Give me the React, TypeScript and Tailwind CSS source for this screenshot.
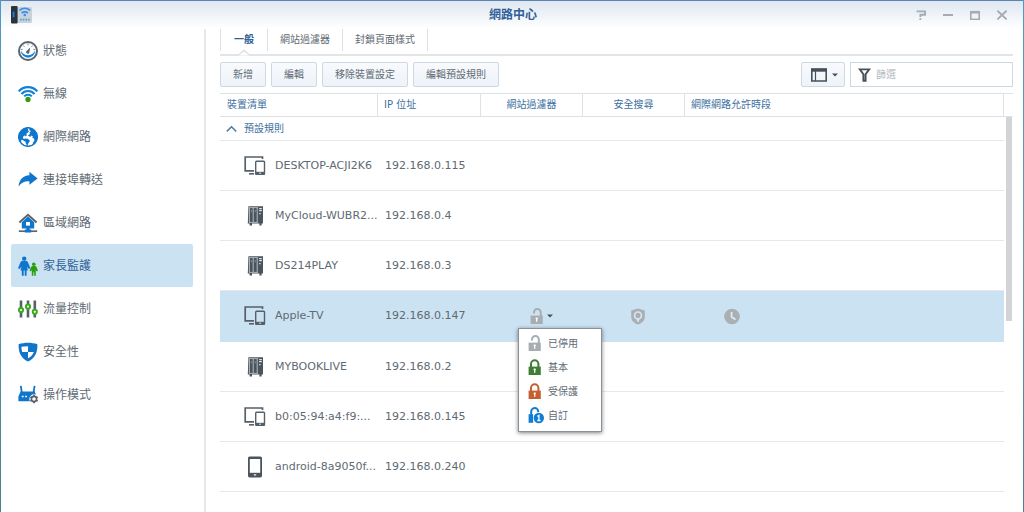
import React, {useState} from 'react';

type IconProps = { className?: string };

const GaugeIcon = () => (
  <svg width="20" height="20" viewBox="0 0 20 20" fill="none">
    <circle cx="10" cy="10" r="9" fill="#fbfcfd" stroke="#5a646e" strokeWidth="2"/>
    <path d="M2.800 9.500a7.200 7.200 0 0 0 14.400 0c-1.600 3-4 4.700-7.200 4.700s-5.600-1.700-7.200-4.700z" fill="#0f80d8"/>
    <path d="M10 2.400v1.800M5.400 4.600l1 1.200M14.600 4.600l-1 1.200M3 8.400h1.500M15.500 8.400H17" stroke="#7b848c" strokeWidth="1"/>
    <path d="M12.200 6.600L8.600 10a1.600 1.600 0 1 0 2.800 1.200z" fill="#5a646e"/>
  </svg>
);

const WifiIcon = () => (
  <svg width="20" height="20" viewBox="0 0 20 20" fill="none">
    <path d="M.6 7.400A12.500 12.500 0 0 1 19.400 7.400M3.400 10a8.700 8.700 0 0 1 13.200 0M6.200 12.400a5.200 5.200 0 0 1 7.600 0" stroke="#0f80d8" strokeWidth="2.100"/>
    <circle cx="10" cy="15.400" r="2.600" fill="#2aa010"/>
  </svg>
);

const GlobeIcon = () => (
  <svg width="20" height="20" viewBox="0 0 20 20" fill="none">
    <circle cx="10" cy="10" r="9.300" fill="#fff" stroke="#0f76cc" strokeWidth="1.500"/>
    <path d="M9.400.800C4.600 1 .800 5 .800 10c0 2.200.8 4.200 2 5.800l.6-3 1.600.4 2.400 1.600.6 2 1.200 2.200 1.200-2.800 1.600-2.200-1.800-2-2.400-.6-2.200.6-.8-2 2.200-1.800.6 1.200 1.200-1.200-.4-1.600 2.400-1.600-.6-2z" fill="#0f76cc"/>
    <path d="M11.600 1l-.4 2.200 1.800.8-1.600 1.600.6 1.400-2.200 1.400 2.600 1.600.6-1.400 1.800.6-.4 1.600 1.600.8.400 2.200-1.800 2.400 1 1.400c2-1.600 3.600-4.400 3.600-7.600C19 5.800 16 1.800 11.600 1z" fill="#0f76cc"/>
  </svg>
);

const ForwardIcon = () => (
  <svg width="20" height="20" viewBox="0 0 20 20" fill="none">
    <path d="M11.400 1.800L19.600 8.400l-8.200 6.400v-3.400C7 11 3.600 12.400.6 16.400 1.200 9.800 4.800 5.600 11.400 5.200z" fill="#0f76cc"/>
  </svg>
);

const HouseIcon = () => (
  <svg width="20" height="20" viewBox="0 0 20 20" fill="none">
    <path d="M.8 18.200h18.400" stroke="#5b656e" strokeWidth="1.700"/>
    <path d="M3.800 9.200L10 3.600l6.200 5.600v6.200h-4.600v1.200h1.600v2.800H6.800v-2.800h1.600v-1.200H3.800z" fill="#0f76cc"/>
    <path d="M1.400 9.400L10 1.800l8.600 7.600" stroke="#5b656e" strokeWidth="2"/>
    <path d="M8 9h4v3.600H8z" fill="#fff"/>
  </svg>
);

const FamilyIcon = () => (
  <svg width="20" height="20" viewBox="0 0 20 20" fill="none">
    <circle cx="6.200" cy="2.600" r="2.200" fill="#0f76cc"/>
    <path d="M4.200 4.800h4l1.500.9 2.700 6.500-1.600.9-1.900-2.700 1.100 4.200H8.600v5.200H6.700v-5.200h-1v5.200H3.800v-5.200H2.400l1.100-4.200-1.900 2.700L0 12.200l2.700-6.500z" fill="#0f76cc"/>
    <circle cx="15.800" cy="8.300" r="1.800" fill="#2aa010"/>
    <path d="M14.200 10h3.200l1 .7 1.600 4.100-1.200.6-1-1.400v5.800h-1.600v-3.600h-.8v3.600h-1.600V14l-1 1.400-1.200-.6 1.600-4.100z" fill="#2aa010"/>
  </svg>
);

const SlidersIcon = () => (
  <svg width="20" height="20" viewBox="0 0 20 20" fill="none">
    <path d="M3 1.600v17M10 1.600v17M16.800 1.600v17" stroke="#56616b" strokeWidth="2.600"/>
    <g fill="#fff" stroke="#38ad1b" strokeWidth="2">
      <circle cx="3" cy="11" r="2.100"/>
      <circle cx="10" cy="7.600" r="2.100"/>
      <circle cx="16.800" cy="12.800" r="2.100"/>
    </g>
  </svg>
);

const ShieldIcon = () => (
  <svg width="20" height="20" viewBox="0 0 20 20" fill="none">
    <path d="M.6 2.200C6.400.200 13.600.200 19.400 2.200c.2 8-2 13.600-9.400 17.400C2.600 15.800.400 10.200.6 2.200z" fill="#0f76cc"/>
    <path d="M10 4.200V10H4.200C3.600 8.200 3.400 6.400 3.400 4.800 5.400 4.400 7.600 4.200 10 4.200zM10 10h5.800c-.8 2.600-2.600 4.600-5.800 6.200z" fill="#fff"/>
  </svg>
);

const RouterIcon = () => (
  <svg width="20" height="20" viewBox="0 0 20 20" fill="none">
    <path d="M2.800.8l1 6.600M16.600.8l-1 6.600" stroke="#0f76cc" strokeWidth="1.800"/>
    <path d="M2.600 6.400h14.200l1.400 4.400v5.400H.4v-4.600z" fill="#0f76cc"/>
    <path d="M3.800 11.400h1.800M7.200 11.400H9" stroke="#fff" strokeWidth="1.500"/>
    <circle cx="16" cy="14" r="4.700" fill="#fff"/>
    <circle cx="16" cy="14" r="2.600" stroke="#56616b" strokeWidth="1.600"/>
    <path d="M16 9.800v1.600M16 16.600v1.600M12.400 11.900l1.400.8M18.200 15.300l1.400.8M12.400 16.100l1.400-.8M18.200 12.700l1.400-.8" stroke="#56616b" strokeWidth="1.700"/>
  </svg>
);

const ComputerIcon = () => (
  <svg width="22" height="22" viewBox="0 0 22 22" fill="none" stroke="#56606a">
    <path d="M18.500 4V2H1.200v13.800H10" strokeWidth="1.700"/>
    <path d="M5 18.800h5" strokeWidth="1.600"/>
    <rect x="11.700" y="6.200" width="8.800" height="13" rx=".8" strokeWidth="1.400"/>
    <path d="M11.500 18.200h9.200" strokeWidth="2.800"/>
    <path d="M15.300 18.200h1.600" stroke="#fff" strokeWidth="1"/>
  </svg>
);

const NasIcon = () => (
  <svg width="22" height="22" viewBox="0 0 22 22" fill="none">
    <path d="M4.400 1.200H19v17.400h-1.400v1.800h-2.200v-1.800H8v1.800H5.600v-1.800H3.800z" fill="#4a545e"/>
    <path d="M5.400 3v14.400M9.200 3v14.400M13.200 3v14.400" stroke="#b3bac0" strokeWidth="1"/>
    <path d="M5 2.600h9M5 17.400h9" stroke="#b3bac0" strokeWidth=".9"/>
    <path d="M7.300 5v2.400M11.200 5v2.400" stroke="#8a939b" strokeWidth=".9"/>
    <path d="M15.200 3.600h2.600M15.200 5.600h2.600M15.200 8.600h1.400" stroke="#e3e6e9" strokeWidth="1.100"/>
  </svg>
);

const PhoneIcon = () => (
  <svg width="22" height="22" viewBox="0 0 22 22" fill="none">
    <rect x="4" y=".6" width="14" height="20.800" rx="1.600" fill="#4a545e"/>
    <path d="M5.800 3h10.400v13.800H5.800z" fill="#fff"/>
    <path d="M9.800 18.900h2.400" stroke="#fff" strokeWidth="1.200"/>
  </svg>
);

const OpenLockIcon = () => (
  <svg width="14" height="17" viewBox="0 0 14 17" fill="none">
    <path d="M4 5.600V4.400a3.400 3.400 0 0 1 6.800 0V8" stroke="#a7adb1" strokeWidth="2"/>
    <path d="M.6 7.600h12.200V16H.600z" fill="#a7adb1"/>
    <path d="M6.700 9.600v4.200M5.600 10.400h2.200" stroke="#fff" strokeWidth="1.300"/>
  </svg>
);

const LockIcon = ({className}: IconProps) => (
  <svg width="14" height="17" viewBox="0 0 14 17" fill="none" className={className}>
    <path d="M3 8V5a3.700 3.700 0 0 1 7.400 0v3" stroke="currentColor" strokeWidth="2"/>
    <path d="M.6 7.600h12.200V16H.600z" fill="currentColor"/>
    <path d="M6.700 9.600v4.200M5.600 10.400h2.200" stroke="#fff" strokeWidth="1.300"/>
  </svg>
);

const CustomLockIcon = () => (
  <svg width="17" height="17" viewBox="0 0 17 17" fill="none">
    <path d="M3.200 8V4.600a3.500 3.500 0 0 1 7-.2v1" stroke="#0f7ed3" strokeWidth="2"/>
    <path d="M.6 7.200h4.600v8.600H.600z" fill="#0f7ed3"/>
    <circle cx="10.800" cy="11" r="5.900" fill="#fff"/>
    <circle cx="10.800" cy="11" r="5.200" fill="#0f7ed3"/>
    <path d="M9.400 9.400l1.500-.9v5M9.300 13.500h3.200" stroke="#fff" strokeWidth="1.300"/>
  </svg>
);

const SafeSearchIcon = () => (
  <svg width="16" height="17" viewBox="0 0 16 17" fill="none">
    <path d="M8 .4l6.800 2.200v6.200c0 3.600-2.600 6.200-6.800 7.800-4.200-1.600-6.800-4.200-6.800-7.800V2.600z" fill="#a9afb3"/>
    <circle cx="8" cy="7.400" r="3.400" stroke="#d5e6f2" strokeWidth="1.700"/>
    <path d="M8 10.400v3.400" stroke="#d5e6f2" strokeWidth="2"/>
  </svg>
);

const ClockIcon = () => (
  <svg width="16" height="17" viewBox="0 0 16 17" fill="none">
    <circle cx="8" cy="8.500" r="7.800" fill="#a9afb3"/>
    <path d="M7.600 4v5l4 2.400" stroke="#dcebf5" strokeWidth="1.800"/>
  </svg>
);

const CaretIcon = () => (
  <svg width="6" height="4" viewBox="0 0 6 4" fill="#46505a"><path d="M0 .4h6L3 3.600z"/></svg>
);

const AppIcon = () => (
  <svg width="22" height="18" viewBox="0 0 22 18" fill="none">
    <rect x="6" y="1" width="15" height="16" rx="1.500" fill="#c9d1d9"/>
    <rect x="0" y="0" width="6.600" height="17.400" rx="1" fill="#2a323c"/>
    <path d="M2.600 5.600v5.600" stroke="#1c7fd8" strokeWidth="1.800"/>
    <path d="M8.400 4.400c3.200-2.600 7.600-2.600 10.800 0M10.600 7c2-1.500 4.400-1.500 6.400 0" stroke="#3a8cf0" strokeWidth="1.700"/>
    <circle cx="13.800" cy="9" r="1.300" fill="#3a8cf0"/>
    <path d="M9 13.600h10" stroke="#4aa8d8" strokeWidth="1.600" strokeDasharray="1.600 1.100"/>
  </svg>
);

const navItems = [
  {label: '狀態', Icon: GaugeIcon},
  {label: '無線', Icon: WifiIcon},
  {label: '網際網路', Icon: GlobeIcon},
  {label: '連接埠轉送', Icon: ForwardIcon},
  {label: '區域網路', Icon: HouseIcon},
  {label: '家長監護', Icon: FamilyIcon},
  {label: '流量控制', Icon: SlidersIcon},
  {label: '安全性', Icon: ShieldIcon},
  {label: '操作模式', Icon: RouterIcon},
];

const tabs = ['一般', '網站過濾器', '封鎖頁面樣式'];

const actions = ['新增', '編輯', '移除裝置設定', '編輯預設規則'];

const devices = [
  {name: 'DESKTOP-ACJI2K6', ip: '192.168.0.115', Icon: ComputerIcon},
  {name: 'MyCloud-WUBR2...', ip: '192.168.0.4', Icon: NasIcon},
  {name: 'DS214PLAY', ip: '192.168.0.3', Icon: NasIcon},
  {name: 'Apple-TV', ip: '192.168.0.147', Icon: ComputerIcon},
  {name: 'MYBOOKLIVE', ip: '192.168.0.2', Icon: NasIcon},
  {name: 'b0:05:94:a4:f9:...', ip: '192.168.0.145', Icon: ComputerIcon},
  {name: 'android-8a9050f...', ip: '192.168.0.240', Icon: PhoneIcon},
];

const TitleBar = () => (
  <header className="grid h-7 shrink-0 grid-cols-[1fr_auto_1fr] items-center bg-linear-to-b from-[#dfe7f0] to-white pr-2 pl-[10px]">
    <AppIcon/>
    <h1 className="text-[12px] font-bold text-[#2f6097]">網路中心</h1>
    <div className="flex justify-end text-[#a3abb3]">
      <button type="button" aria-label="說明" className="flex w-[27px] justify-center">
        <svg width="12" height="12" viewBox="0 0 12 12" fill="none" stroke="currentColor" strokeWidth="1.900">
          <path d="M1.600 2.400H10v3.400H5.400V8M5.400 9.200v1.800"/>
        </svg>
      </button>
      <button type="button" aria-label="最小化" className="flex w-[27px] justify-center">
        <svg width="12" height="12" viewBox="0 0 12 12" stroke="currentColor" strokeWidth="2"><path d="M1 6h10"/></svg>
      </button>
      <button type="button" aria-label="最大化" className="flex w-[27px] justify-center">
        <svg width="12" height="12" viewBox="0 0 12 12" fill="none" stroke="currentColor">
          <path d="M1.800 2.500v7.700h8.400V2.500" strokeWidth="1.600"/>
          <path d="M1 3.200h10" strokeWidth="2.600"/>
        </svg>
      </button>
      <button type="button" aria-label="關閉" className="flex w-[27px] justify-center">
        <svg width="12" height="12" viewBox="0 0 12 12" stroke="currentColor" strokeWidth="1.900"><path d="M1.400 1.800l9.200 8.600M10.600 1.800L1.400 10.400"/></svg>
      </button>
    </div>
  </header>
);

const FilterMenu = () => (
  <ul className="absolute top-full -left-3 z-10 mt-[3px] w-[84px] border border-[#8a9299] bg-white py-[3px] shadow-[0_1px_4px_rgba(0,0,0,0.5)]">
    <li><button type="button" className="flex h-6 w-full items-center gap-[6px] pl-[9px]"><OpenLockIcon/>已停用</button></li>
    <li><button type="button" className="flex h-6 w-full items-center gap-[6px] pl-[9px]"><LockIcon className="text-[#3f7d35]"/>基本</button></li>
    <li><button type="button" className="flex h-6 w-full items-center gap-[6px] pl-[9px]"><LockIcon className="text-[#c65f2f]"/>受保護</button></li>
    <li><button type="button" className="flex h-6 w-full items-center gap-[3px] pl-[9px]"><CustomLockIcon/>自訂</button></li>
  </ul>
);

const DeviceTable = () => {
  const [selected, setSelected] = useState('Apple-TV');
  const [menuOpen, setMenuOpen] = useState(true);

  return (
    <table className="min-w-0 flex-1 table-fixed border-separate border-spacing-0 text-left">
      <colgroup>
        <col className="w-[158px]"/>
        <col className="w-[103px]"/>
        <col className="w-[102px]"/>
        <col className="w-[102px]"/>
        <col/>
      </colgroup>
      <thead>
        <tr className="h-6 text-[#3d709e] *:border-y *:border-[#dde2e8] *:p-0 *:font-normal">
          <th className="border-r"><span className="pl-[7px]">裝置清單</span></th>
          <th className="border-r"><span className="pl-[6px]">IP 位址</span></th>
          <th className="border-r text-center">網站過濾器</th>
          <th className="border-r text-center">安全搜尋</th>
          <th className="border-r"><span className="pl-[6px]">網際網路允許時段</span></th>
        </tr>
      </thead>
      <tbody>
        <tr className="h-6">
          <td colSpan={5} className="border-b border-[#e6e9ec] p-0">
            <button type="button" className="flex items-center gap-[7px] pl-[6px] text-[#3d709e]">
              <svg width="11" height="8" viewBox="0 0 11 8" fill="none" stroke="#4a7fa8" strokeWidth="1.500"><path d="M.8 6.400l4.700-4.600 4.700 4.600"/></svg>
              預設規則
            </button>
          </td>
        </tr>
        {devices.map(({name, ip, Icon}) => {
          const active = name === selected;
          return (
            <tr
              key={name}
              onClick={() => setSelected(name)}
              className={active
                ? 'h-[51px] bg-[#cbe2f2] *:border-b *:border-[#cbe2f2] *:p-0'
                : 'h-[50px] *:border-b *:border-[#e6e9ec] *:p-0'}
            >
              <td>
                <div className="flex items-center gap-[9px] pl-6 text-[11px]"><Icon/>{name}</div>
              </td>
              <td className="text-[11px]"><span className="pl-[7px]">{ip}</span></td>
              <td>
                {active && (
                  <div className="relative ml-[49px] w-[34px]">
                    <button type="button" aria-label="網站過濾器" aria-expanded={menuOpen}
                            onClick={() => setMenuOpen(!menuOpen)} className="flex items-center gap-[3px]">
                      <OpenLockIcon/><CaretIcon/>
                    </button>
                    {menuOpen && <FilterMenu/>}
                  </div>
                )}
              </td>
              <td>
                {active && <button type="button" aria-label="安全搜尋" className="ml-[47px] block"><SafeSearchIcon/></button>}
              </td>
              <td>
                {active && <button type="button" aria-label="網際網路允許時段" className="ml-[39px] block"><ClockIcon/></button>}
              </td>
            </tr>
          );
        })}
      </tbody>
    </table>
  );
};

const App = () => {
  const [page, setPage] = useState('家長監護');
  const [tab, setTab] = useState('一般');

  return (
    <div className="h-screen overflow-hidden bg-linear-to-b from-[#4a9ac4] via-[#5f97a3] to-[#50808e] px-px font-['DejaVu_Sans','Noto_Sans_CJK_TC',sans-serif] text-[10px] leading-4 text-[#606a73]">
      <div className="flex h-full flex-col border-t border-[#5c83b3] bg-white">
        <TitleBar/>
        <div className="flex min-h-0 flex-1">
          <nav className="w-[205px] shrink-0 border-r-2 border-[#e6e8ea] pr-[11px] pl-[10px]">
            {navItems.map(({label, Icon}) => (
              <a
                key={label}
                href="#"
                onClick={() => setPage(label)}
                className={page === label
                  ? 'flex h-[43px] items-center gap-[5px] rounded-[2px] bg-[#cbe2f2] pl-[7px] text-[12px] text-[#2f6097]'
                  : 'flex h-[43px] items-center gap-[5px] rounded-[2px] pl-[7px] text-[12px]'}
              >
                <Icon/>{label}
              </a>
            ))}
          </nav>
          <main className="flex min-w-0 flex-1 flex-col pr-[10px] pl-[14px]">
            <div className="flex h-[27px] items-start border-b-2 border-[#e2e4e6]">
              {tabs.map((label) => (
                <button
                  key={label}
                  type="button"
                  onClick={() => setTab(label)}
                  className={tab === label
                    ? 'relative h-[22px] border-x border-[#d9e0e8] px-[13px] font-bold text-[#2f6097]'
                    : 'h-[22px] border-r border-[#d9e0e8] px-3'}
                >
                  {label}
                  {tab === label && (
                    <svg width="14" height="7" viewBox="0 0 14 7" className="absolute top-5 left-1/2 -translate-x-1/2">
                      <path d="M0 6.500L7 .800l7 5.700z" fill="#fff"/>
                      <path d="M0 6.300h1.400L7 1.200l5.600 5.100H14" fill="none" stroke="#e0e2e4" strokeWidth="1.400"/>
                    </svg>
                  )}
                </button>
              ))}
            </div>
            <div className="flex h-[37px] shrink-0 items-center gap-[5px]">
              {actions.map((label) => (
                <button key={label} type="button"
                        className="h-[25px] rounded-[2px] border border-[#cdd8e3] bg-linear-to-b from-[#f8fafd] to-[#edf3f9] px-3">
                  {label}
                </button>
              ))}
              <button type="button" aria-label="顯示模式"
                      className="ml-auto flex h-[25px] items-center gap-[5px] rounded-[2px] border border-[#cdd8e3] bg-linear-to-b from-[#f8fafd] to-[#edf3f9] pr-[6px] pl-[9px]">
                <svg width="16" height="14" viewBox="0 0 16 14" fill="none" stroke="#46505a">
                  <path d="M.8 1h14.400v12H.800z" strokeWidth="1.600"/>
                  <path d="M0 2.200h16" strokeWidth="3"/>
                  <path d="M4.500 3v10" strokeWidth="1.200"/>
                </svg>
                <CaretIcon/>
              </button>
              <label className="flex h-[25px] w-[163px] items-center gap-[5px] border border-[#cdd8e3] bg-white pl-[7px]">
                <svg width="13" height="14" viewBox="0 0 13 14" fill="none" stroke="#46505a" strokeWidth="1.900">
                  <path d="M1.800 1.400h9.400L7.600 6.200v6.600H5.400V6.200z"/>
                </svg>
                <input type="text" aria-label="篩選" placeholder="篩選"
                       className="min-w-0 flex-1 outline-none placeholder:text-[#b4bac0]"/>
              </label>
            </div>
            <div className="flex min-h-0 flex-1 items-start">
              <DeviceTable/>
              <div className="w-[9px] shrink-0">
                <div className="h-6 border-y border-[#dde2e8]"/>
                <div className="ml-[2px] h-[204px] w-[6px] bg-[#d2d4d7]"/>
              </div>
            </div>
          </main>
        </div>
      </div>
    </div>
  );
};

export default App;
